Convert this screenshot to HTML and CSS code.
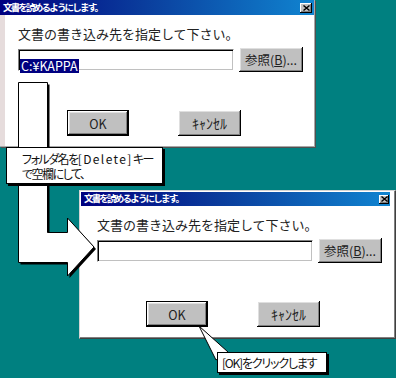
FILE: index.html
```html
<!DOCTYPE html>
<html lang="ja">
<head>
<meta charset="utf-8">
<title>文書を読めるようにします。</title>
<link rel="stylesheet" href="styles.css">
</head>
<body>
<div class="desktop">
  <div class="dialog dialog-first">
    <div class="titlebar">
      <span class="title">文書を読めるようにします。</span>
      <span class="close"><svg width="7" height="6" viewBox="0 0 7 6"><path d="M0.5 0.5 L6.5 5.5 M6.5 0.5 L0.5 5.5" stroke="#000" stroke-width="1.4" fill="none"/></svg></span>
    </div>
    <div class="body">
      <div class="label">文書の書き込み先を指定して下さい。</div>
      <div class="row">
        <div class="input"><span class="sel">C:¥KAPPA</span></div>
        <div class="btn browse">参照(<u>B</u>)...</div>
      </div>
      <div class="actions">
        <div class="btn ok">OK</div>
        <div class="btn cancel">ｷｬﾝｾﾙ</div>
      </div>
    </div>
  </div>

  <div class="dialog dialog-second">
    <div class="titlebar">
      <span class="title">文書を読めるようにします。</span>
      <span class="close"><svg width="7" height="6" viewBox="0 0 7 6"><path d="M0.5 0.5 L6.5 5.5 M6.5 0.5 L0.5 5.5" stroke="#000" stroke-width="1.4" fill="none"/></svg></span>
    </div>
    <div class="body">
      <div class="label">文書の書き込み先を指定して下さい。</div>
      <div class="row">
        <div class="input"></div>
        <div class="btn browse">参照(<u>B</u>)...</div>
      </div>
      <div class="actions">
        <div class="btn ok">OK</div>
        <div class="btn cancel">ｷｬﾝｾﾙ</div>
      </div>
    </div>
  </div>

  <svg class="overlay" width="396" height="378" viewBox="0 0 396 378">
    <polygon points="20.5,84.5 49.5,84.5 49.5,234.5 69.5,234.5 69.5,220 96,249 69.5,278 69.5,264.5 20.5,264.5" fill="#000"/>
    <polygon points="18.5,82.5 47.5,82.5 47.5,232.5 67.5,232.5 67.5,218 94,247 67.5,276 67.5,262.5 18.5,262.5" fill="#fff" stroke="#000" stroke-width="1"/>
    <polygon points="201,328 218,362 230,354" fill="#000"/>
    <polygon points="199,326 216,360 228,352" fill="#fff" stroke="#000" stroke-width="1"/>
  </svg>

  <div class="callout callout-delete">
    <div class="line"><span class="kana">フォルダ名を</span><span class="latin">[Delete]</span><span class="kana">キー</span></div>
    <div class="line kana">で空欄にして、</div>
  </div>
  <div class="callout callout-ok">[OK]をクリックします</div>
</div>
</body>
</html>
```

FILE: styles.css
```css
* {
  box-sizing: border-box;
  margin: 0;
  padding: 0;
}

html,
body {
  width: 396px;
  height: 378px;
  overflow: hidden;
}

body {
  background: #008080;
  font-family: "Noto Sans CJK JP", "Noto Sans", sans-serif;
}

.desktop {
  position: relative;
  width: 396px;
  height: 378px;
  background: #008080;
  overflow: hidden;
}

.dialog {
  position: absolute;
  display: flex;
  flex-direction: column;
  background: #fff;
}

.dialog-first {
  left: 0;
  top: 0;
  width: 315px;
  height: 147px;
  border-right: 1px solid #a8a8a8;
  border-bottom: 1px solid #a8a8a8;
  box-shadow: 1px 1px 0 #505050;
}

.dialog-second {
  left: 79px;
  top: 190px;
  width: 317px;
  height: 149px;
  border: 1px solid;
  border-color: #d4d4d4 #404040 #404040 #d4d4d4;
  padding: 1px 5px 1px 1px;
  box-shadow: inset -1px -1px 0 #808080;
}

.titlebar {
  display: flex;
  align-items: center;
  justify-content: space-between;
  height: 15px;
  padding: 0 2px 0 3px;
  background: linear-gradient(to right, #000080 0%, #0a3c9c 45%, #1084d0 100%);
  flex-shrink: 0;
}

.dialog-second .titlebar {
  height: 14px;
  padding-right: 1px;
}

.title {
  color: #fff;
  font-size: 9.5px;
  font-weight: bold;
  letter-spacing: -1.8px;
  line-height: 1;
  white-space: nowrap;
}

.close {
  display: flex;
  align-items: center;
  justify-content: center;
  width: 12px;
  height: 10px;
  background: #c0c0c0;
  box-shadow: inset -1px -1px 0 #000, inset 1px 1px 0 #fff, inset -2px -2px 0 #808080;
}

.dialog-second .close {
  width: 10px;
  height: 9px;
}

.body {
  flex: 1;
  padding: 11px 0 0 13px;
}

.dialog-first .body {
  border-left: 5px solid #e6dcdc;
}

.dialog-second .body {
  padding-left: 16px;
}

.label {
  font-size: 13px;
  line-height: 16px;
  color: #222;
  white-space: nowrap;
}

.row {
  display: flex;
  align-items: flex-start;
  gap: 5px;
  margin-top: 5px;
}

.input {
  width: 216px;
  height: 22px;
  margin-top: 2px;
  border: 1px solid;
  border-color: #808080 #fff #fff #808080;
  box-shadow: inset 1px 1px 0 #000, inset -1px -1px 0 #c0c0c0;
  padding: 2px 0 0 1px;
}

.sel {
  display: inline-block;
  height: 14px;
  padding: 0 1px;
  background: #000080;
  color: #fff;
  font-size: 12.5px;
  line-height: 14px;
}

.btn {
  display: flex;
  align-items: center;
  justify-content: center;
  background: #c0c0c0;
  color: #222;
  font-size: 12.5px;
  white-space: nowrap;
  box-shadow: inset -1px -1px 0 #000, inset 1px 1px 0 #fff, inset -2px -2px 0 #808080, inset 2px 2px 0 #dfdfdf;
}

.browse {
  width: 64px;
  height: 25px;
}

.actions {
  display: flex;
  gap: 49px;
  margin-top: 38px;
  padding-left: 49px;
}

.ok {
  width: 62px;
  height: 26px;
  border: 1px solid #000;
}

.cancel {
  width: 63px;
  height: 26px;
  font-size: 14px;
}

.overlay {
  position: absolute;
  left: 0;
  top: 0;
  pointer-events: none;
}

.callout {
  position: absolute;
  background: #fff;
  border: 1px solid #000;
  box-shadow: 2px 2px 0 #000;
  color: #111;
  font-size: 12px;
  font-feature-settings: "palt";
  white-space: nowrap;
}

.callout-delete {
  left: 6px;
  top: 147px;
  width: 157px;
  height: 37px;
  padding: 3px 0 0 15px;
}

.callout-delete .line {
  height: 15px;
  line-height: 15px;
}

.callout-delete .kana {
  letter-spacing: -1.5px;
}

.callout-delete .latin {
  letter-spacing: 1.4px;
}

.callout-ok {
  left: 217px;
  top: 352px;
  width: 110px;
  height: 21px;
  padding-left: 4px;
  line-height: 19px;
  letter-spacing: -1.2px;
}
```
